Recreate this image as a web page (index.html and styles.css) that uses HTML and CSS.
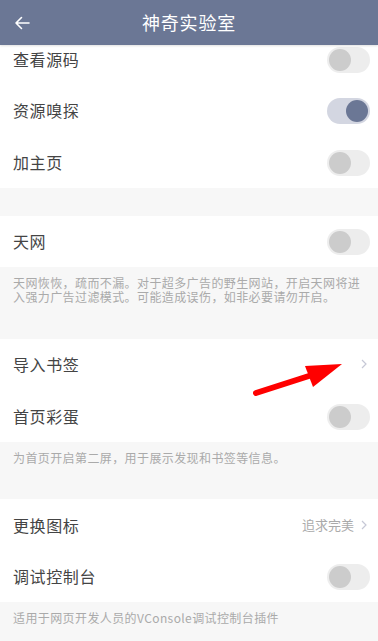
FILE: index.html
```html
<!DOCTYPE html>
<html lang="zh-CN">
<head>
<meta charset="utf-8">
<title>神奇实验室</title>
<link rel="stylesheet" href="styles.css">
</head>
<body>
<header class="topbar">
  <span class="back">
    <svg width="16" height="14" viewBox="0 0 16 14"><path d="M15 7H2M7.5 1.5L2 7l5.5 5.5" fill="none" stroke="#fff" stroke-width="1.6" stroke-linecap="round" stroke-linejoin="round"/></svg>
  </span>
  <h1 class="title">神奇实验室</h1>
  <span class="spacer"></span>
</header>
<main class="list">
  <section class="group">
    <div class="row"><span class="label">查看源码</span><span class="toggle"></span></div>
    <div class="row"><span class="label">资源嗅探</span><span class="toggle on"></span></div>
    <div class="row"><span class="label">加主页</span><span class="toggle"></span></div>
  </section>
  <section class="group">
    <div class="row"><span class="label">天网</span><span class="toggle"></span></div>
    <p class="desc">天网恢恢，疏而不漏。对于超多广告的野生网站，开启天网将进入强力广告过滤模式。可能造成误伤，如非必要请勿开启。</p>
  </section>
  <section class="group">
    <div class="row"><span class="label">导入书签</span><span class="chev"><svg width="6" height="10" viewBox="0 0 6 10"><path d="M1 1l4 4-4 4" fill="none" stroke="#c6c8d6" stroke-width="1.2"/></svg></span></div>
    <div class="row"><span class="label">首页彩蛋</span><span class="toggle"></span></div>
    <p class="desc">为首页开启第二屏，用于展示发现和书签等信息。</p>
  </section>
  <section class="group">
    <div class="row"><span class="label">更换图标</span><span class="value">追求完美<span class="chev"><svg width="6" height="10" viewBox="0 0 6 10"><path d="M1 1l4 4-4 4" fill="none" stroke="#c6c8d6" stroke-width="1.2"/></svg></span></span></div>
    <div class="row"><span class="label">调试控制台</span><span class="toggle"></span></div>
    <p class="desc">适用于网页开发人员的VConsole调试控制台插件</p>
  </section>
</main>
<svg class="pointer" width="100" height="44" viewBox="0 0 100 44">
  <line x1="6" y1="38" x2="62" y2="20" stroke="#ff0000" stroke-width="6" stroke-linecap="round"/>
  <polygon points="92,9 55,11 63,32" fill="#ff0000"/>
</svg>
</body>
</html>
```
FILE: styles.css
```css
html, body {
  margin: 0;
  padding: 0;
}
body {
  width: 378px;
  height: 641px;
  overflow: hidden;
  background: #f7f7f7;
  font-family: "Noto Sans CJK SC", "Noto Sans", sans-serif;
  position: relative;
}
.topbar {
  position: relative;
  z-index: 2;
  height: 45px;
  background: #6b7795;
  display: grid;
  grid-template-columns: 60px 1fr 60px;
  align-items: center;
  box-shadow: 0 1px 2px rgba(0,0,0,0.12);
}
.back {
  display: flex;
  align-items: center;
  padding-left: 14px;
}
.title {
  margin: 0;
  text-align: center;
  color: #fff;
  font-size: 18px;
  letter-spacing: 0.8px;
  font-weight: normal;
  line-height: 45px;
}
.list {
  margin-top: -12px;
  position: relative;
  z-index: 1;
}
.group + .group {
  margin-top: 28px;
}
.row {
  height: 51.5px;
  background: #fff;
  display: flex;
  align-items: center;
  justify-content: space-between;
  padding: 0 8px 0 13px;
}
.label {
  font-size: 16px;
  letter-spacing: 0.6px;
  color: #444;
}
.toggle {
  width: 43px;
  height: 26px;
  border-radius: 13px;
  background: #ededed;
  position: relative;
  box-sizing: border-box;
  margin-top: 2px;
}
.toggle::after {
  content: "";
  position: absolute;
  top: 2px;
  left: 2px;
  width: 22px;
  height: 22px;
  border-radius: 50%;
  background: #cccccc;
}
.toggle.on {
  background: #d3d6e1;
}
.toggle.on::after {
  left: 19px;
  background: #6b7795;
}
.chev {
  display: inline-flex;
  align-items: center;
  padding-right: 3px;
}
.value {
  display: inline-flex;
  align-items: center;
  gap: 7px;
  font-size: 13px;
  color: #aaa;
}
.desc {
  margin: 0;
  padding: 9px 13px 6px;
  font-size: 12px;
  letter-spacing: 0.4px;
  line-height: 14.3px;
  color: #aaa;
}
.pointer {
  position: absolute;
  left: 250px;
  top: 355px;
  z-index: 3;
}
```
